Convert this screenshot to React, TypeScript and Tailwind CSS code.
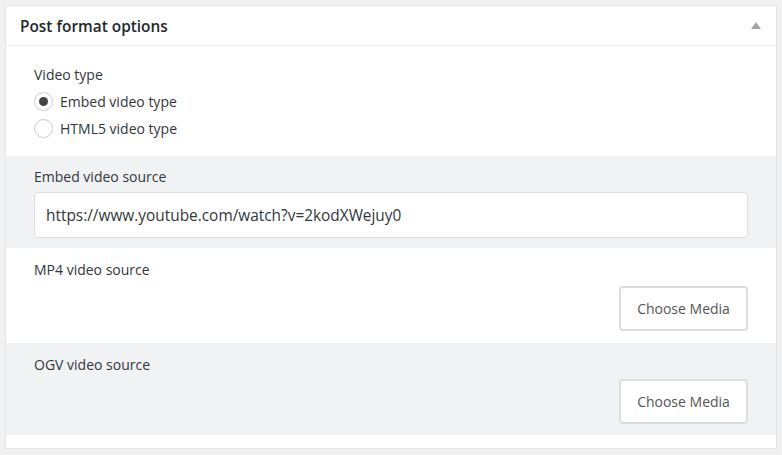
import React from 'react';

const font = { fontFamily: '"Open Sans", "Noto Sans", sans-serif' };

function Radio({ checked, label }: { checked?: boolean; label: string }) {
  return (
    <label className="flex items-center gap-[7px] h-[27px]">
      <span className="w-[19px] h-[19px] rounded-full border border-[#ccc] bg-white flex items-center justify-center">
        {checked && <span className="w-[9px] h-[9px] rounded-full bg-[#444]" />}
      </span>
      <span className="text-[14px] text-[#32373c]">{label}</span>
    </label>
  );
}

function MediaRow({ label, gray }: { label: string; gray?: boolean }) {
  return (
    <div className={`px-[28px] pt-[12px] ${gray ? 'bg-[#f1f2f3] pb-[11px]' : 'bg-white pb-[12px]'}`}>
      <div className="text-[14px] text-[#32373c] leading-[20px]">{label}</div>
      <div className={`flex justify-end ${gray ? 'mt-[4px]' : 'mt-[6px]'}`}>
        <button className="h-[45px] w-[129px] rounded-[4px] border-2 border-[#ddd] bg-white text-[14px] text-[#555]">Choose Media</button>
      </div>
    </div>
  );
}

export default function App() {
  return (
    <div className="min-h-[455px] bg-[#f1f1f1] p-[5px]" style={font}>
      <div className="border border-[#e5e5e5] bg-white">
        <div className="h-[40px] flex items-center justify-between px-[14px] border-b border-[#eee]">
          <h2 className="mt-[2px] text-[15.4px] font-semibold text-[#23282d]">Post format options</h2>
          <svg width="10" height="8" viewBox="0 0 10 8" className="mr-[1px]"><path d="M5 0 L10 7 L0 7 Z" fill="#a0a5aa" /></svg>
        </div>
        <div className="px-[28px] pt-[19px] pb-[14px]">
          <div className="text-[14px] text-[#32373c] leading-[20px] mb-[3px]">Video type</div>
          <Radio checked label="Embed video type" />
          <Radio label="HTML5 video type" />
        </div>
        <div className="bg-[#f1f2f3] px-[28px] pt-[11px] pb-[10px]">
          <div className="text-[14px] text-[#32373c] leading-[20px]">Embed video source</div>
          <input
            readOnly
            value="https://www.youtube.com/watch?v=2kodXWejuy0"
            className="mt-[5px] w-full h-[46px] rounded-[4px] border border-[#ddd] bg-white px-[11px] text-[15.4px] text-[#32373c] outline-none"
          />
        </div>
        <MediaRow label="MP4 video source" />
        <MediaRow label="OGV video source" gray />
        <div className="h-[13px]" />
      </div>
    </div>
  );
}
